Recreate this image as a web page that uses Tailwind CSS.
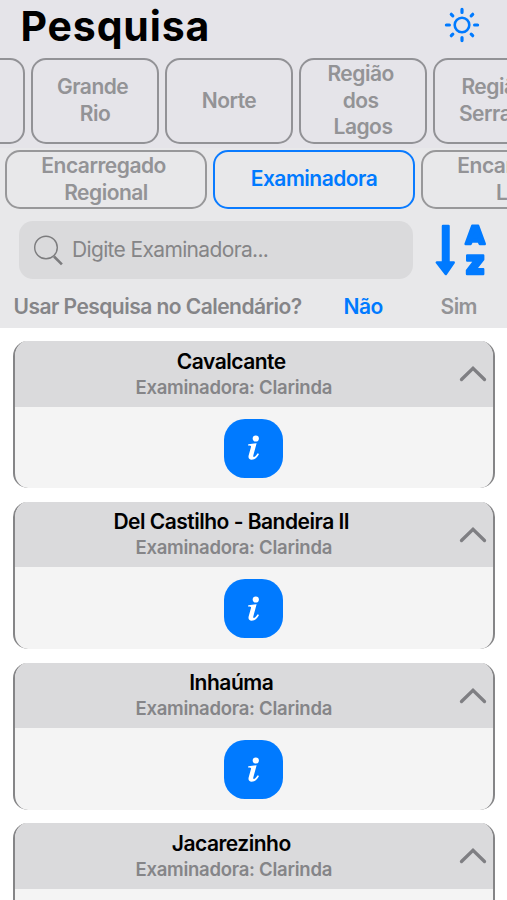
<!DOCTYPE html>
<html lang="pt-BR">
<head>
<meta charset="utf-8">
<title>Pesquisa</title>
<script src="https://cdn.jsdelivr.net/npm/@tailwindcss/browser@4"></script>
</head>
<body class="w-[507px] h-[900px] overflow-hidden bg-white font-['Inter','Liberation_Sans',sans-serif]">
<svg class="hidden">
  <symbol id="up" viewBox="0 0 28 18"><path d="M2.500 14.500 14 3.200 25.500 14.500" fill="none" stroke="#7f7f83" stroke-width="3.300" stroke-linecap="round" stroke-linejoin="miter"/></symbol>
  <symbol id="info" viewBox="0 0 14 26"><circle cx="8.800" cy="3.500" r="3.100"/><path d="M1.300 9.300 9.600 8.300 6.300 20.500C6 21.800 6.600 22.300 7.400 21.800 8.700 21.100 9.700 19.700 10.700 18.200L12 19C10.300 22.200 8 24.700 4.700 24.700 2 24.700 1 22.900 1.700 20.300L4 12C4.300 10.800 3.500 10.500 1 10.500Z"/></symbol>
</svg>
<header class="h-[328px] overflow-hidden bg-[#e8e8ea] text-[#939396]">
  <div class="h-[148px] bg-[#e5e4e9]">
    <div class="h-[58px] flex justify-between pl-[20.500px] pr-[27px]">
      <h1 class="text-[41px] leading-[52px] font-bold text-black tracking-[0.850px]">Pesquisa</h1>
      <svg class="w-9 h-9 mt-[7px]" viewBox="0 0 36 36" fill="none" stroke="#007aff" stroke-width="3.200" stroke-linecap="round"><circle cx="18" cy="18" r="7.300" stroke-width="2.600"/><path d="M18 2.400v3M18 30.600v3M2.400 18h3M30.600 18h3M7.300 7.300l1.500 1.500M27.200 27.200l1.500 1.500M7.300 28.700l1.500-1.500M27.200 8.800l1.500-1.500"/></svg>
    </div>
    <div class="flex gap-[6px] -ml-[103px] w-[680px] h-[86px] text-[21px] tracking-[-0.500px] leading-[26.700px] font-semibold text-center *:shrink-0 *:w-[128px] *:rounded-[15px] *:border-2 *:border-[#929296] *:flex *:items-center *:justify-center">
      <div></div>
      <div><span>Grande&nbsp;<br>Rio</span></div>
      <div><span>Norte</span></div>
      <div><span>Região&nbsp;<br>dos&nbsp;<br>Lagos</span></div>
      <div><span>Região&nbsp;<br>Serrana</span></div>
    </div>
  </div>
  <div class="flex gap-[6px] ml-[5px] mt-[2px] w-[640px] h-[59px] text-[21px] tracking-[-0.500px] leading-[26.700px] font-semibold text-center *:shrink-0 *:w-[202px] *:rounded-[15px] *:border-2 *:flex *:items-center *:justify-center">
    <div class="border-[#98989a]"><span>Encarregado&nbsp;<br>Regional</span></div>
    <div class="border-[#0a7bff] text-[#007aff]"><span>Examinadora</span></div>
    <div class="border-[#98989a]"><span>Encarregado&nbsp;<br>Local</span></div>
  </div>
  <div class="flex mt-[12px] ml-[19px] h-[58px]">
    <div class="flex items-center w-[394px] rounded-[14px] bg-[#dadadc] pl-[14px] text-[21px] tracking-[-0.650px] text-[#858587]">
      <svg class="w-8 h-8 mt-[2px] mr-[7px]" viewBox="0 0 32 32" fill="none" stroke="#7c7c7e"><circle cx="13" cy="12.500" r="11.300" stroke-width="1.400"/><path d="m21 21.500 7.900 7.900" stroke-width="2.600"/></svg>
      <span>Digite Examinadora...</span>
    </div>
    <svg class="ml-[21px] mt-[2px] w-[53px] h-[54px]" viewBox="0 0 53 54" fill="#007aff" stroke="#007aff" stroke-linejoin="round"><path d="M9 3h5.500v36.500h5.200L11.800 51 2.900 39.500H9Z" stroke-width="2.500"/><path fill-rule="evenodd" d="M38.200 2.800h6l6.600 18.200h-5l-1.200-2.500h-6.800l-1.200 2.500h-5ZM41.200 10.400l-1.700 3.700h3.400Z" stroke-width="2.400"/><path d="M33.200 32.500h16v4L41.500 46.300H49.200v4.800H33V47.500L40.700 37.600h-7.500Z" stroke-width="2.400"/></svg>
  </div>
  <div class="flex items-center mt-[14px] pl-[13.500px] h-[28px] text-[21px] tracking-[-0.530px] font-semibold">
    <span class="w-[330px] text-[#858588]">Usar Pesquisa no Calendário?</span><span class="w-[97px] text-[#007aff]">Não</span><span>Sim</span>
  </div>
</header>
<main id="list" class="flex flex-col gap-[13.800px] h-[572px] overflow-hidden pt-[13px] pl-[13px] pr-[12.500px]"></main>
<template id="card">
  <section class="shrink-0 h-[147px] rounded-[15px] border-x-2 border-[#858587] overflow-hidden bg-[#f4f4f4]">
    <div class="relative h-[65.500px] bg-[#dadadc] pt-[6.500px] pr-[40px] text-center font-semibold">
      <h2 class="-ml-[5px] text-[21px] tracking-[-0.500px] leading-[28px] text-black"></h2>
      <p class="text-[18.500px] tracking-[-0.250px] leading-[22px] text-[#858588]">Examinadora: Clarinda</p>
      <svg class="absolute right-[6px] top-[24px] w-[28px] h-[18px]"><use href="#up"/></svg>
    </div>
    <div class="mx-auto mt-[12px] size-[59px] rounded-[21px] bg-[#007aff] flex items-center justify-center"><svg class="w-[14px] h-[26px] fill-white"><use href="#info"/></svg></div>
  </section>
</template>
<script>
for (const name of ["Cavalcante", "Del Castilho - Bandeira II", "Inhaúma", "Jacarezinho"]) {
  const card = document.getElementById("card").content.cloneNode(true);
  card.querySelector("h2").textContent = name;
  document.getElementById("list").append(card);
}
</script>
</body>
</html>
